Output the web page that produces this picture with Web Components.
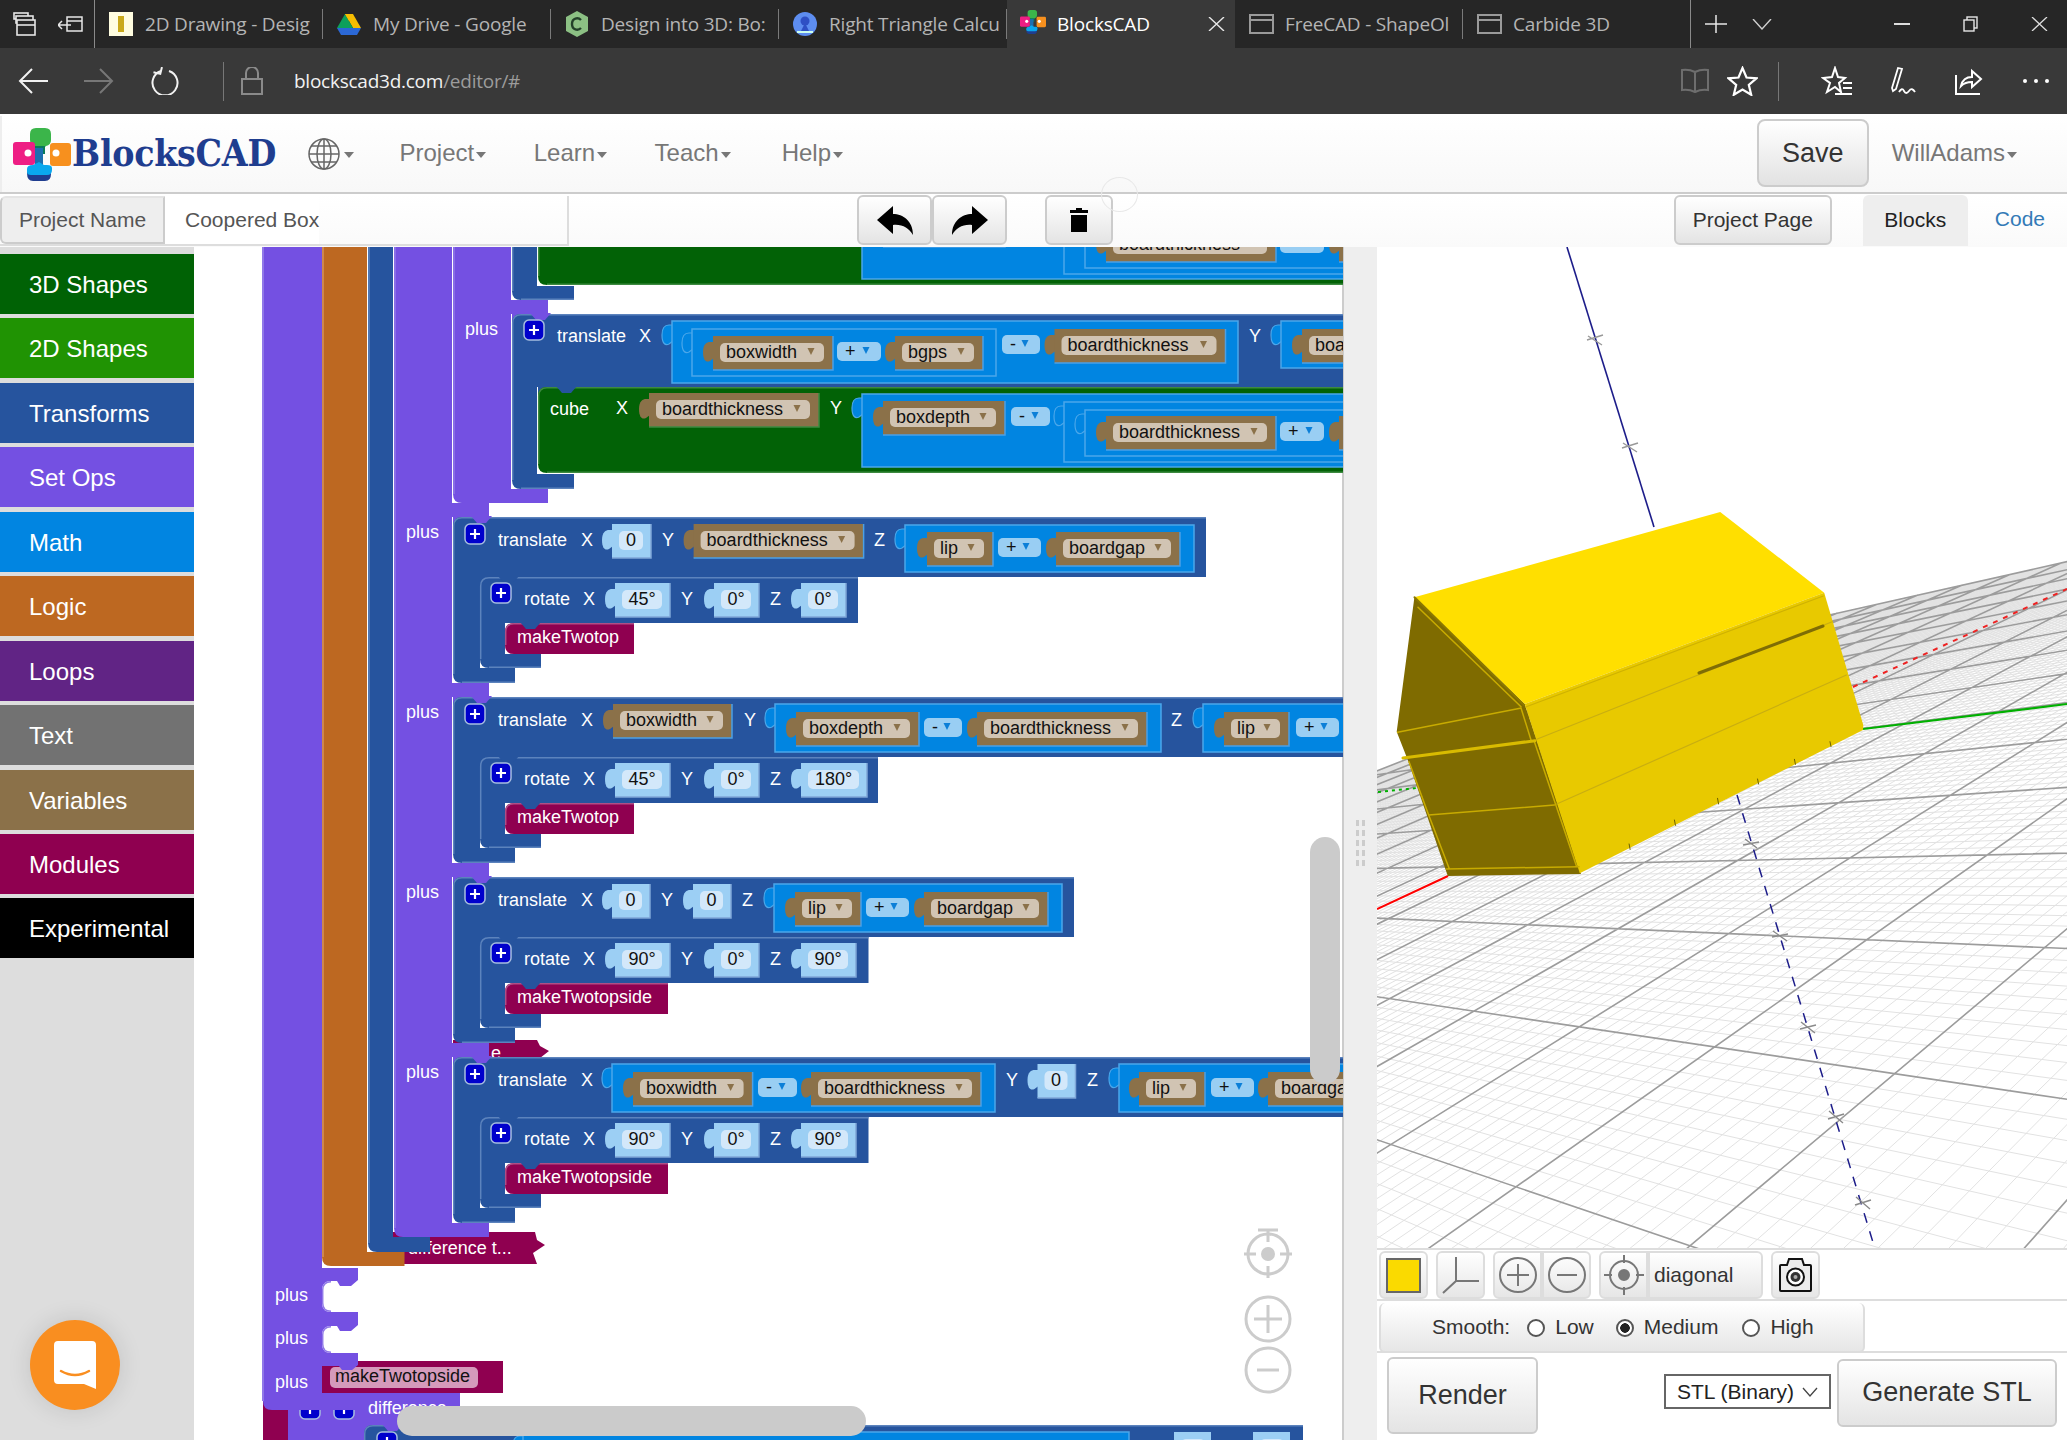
<!DOCTYPE html>
<html><head><meta charset="utf-8"><title>BlocksCAD</title>
<style>html,body{margin:0;padding:0;height:1440px;width:2067px;overflow:hidden;background:#fff}
cad-main{height:1193px}</style></head>
<body>
<edge-tabs></edge-tabs>
<edge-address></edge-address>
<cad-nav></cad-nav>
<cad-toolbar></cad-toolbar>
<cad-main>
  <cad-toolbox></cad-toolbox>
  <block-canvas></block-canvas>
  <split-gutter></split-gutter>
  <view-pane></view-pane>
</cad-main>
<chat-bubble></chat-bubble>
<script>
const def=(name,css,html)=>customElements.define(name,class extends HTMLElement{
  connectedCallback(){ if(this.shadowRoot) return; this.attachShadow({mode:'open'}).innerHTML=`<style>${css}</style>`+(typeof html==='function'?html(this):html);}
});
const logo=(w,h)=>`<svg width="${w}" height="${h}" viewBox="0 0 58 53">
<path d="M17 12V6q0-6 6-6h9q6 0 6 6v6q0 5-5 6l-2 2h-7l-2-2q-5-1-5-6z" fill="#3bb54a"/>
<rect x="21" y="18" width="11" height="8" fill="#0a7a5a"/>
<rect x="22" y="20" width="8" height="18" fill="#1c6fb0"/>
<rect x="0" y="14" width="22" height="23" rx="3" fill="#ee1e84"/><circle cx="15" cy="25" r="3.5" fill="#fff"/>
<rect x="37" y="15" width="21" height="23" rx="3" fill="#f7901e"/><circle cx="43" cy="25" r="3.5" fill="#fff"/>
<path d="M14 45q0 8 6 8h12q6 0 6-7v-4H14z" fill="#1f3d8f"/>
<path d="M14 44q0 3 4 3h16q5 0 5-5v-2q0-3-5-3h-3l-5-3-6 3q-6 0-6 4z" fill="#0aa8ee"/></svg>`;
const pageIco=`<svg width="25" height="20" viewBox="0 0 25 20" fill="none" stroke="#9a9a9a" stroke-width="2"><rect x="1" y="1" width="23" height="18"/><path d="M1 6h23"/></svg>`;
/* ---------- browser chrome ---------- */
def('browser-tab',`:host{display:flex;align-items:center;width:228px;height:48px;box-sizing:border-box;padding-left:13px;position:relative;color:#b4b4b4}
:host([active]){background:#393939;color:#fff}
:host(:not([active]):not([last]))::after{content:"";position:absolute;right:0;top:9px;height:30px;width:1px;background:#7a7a7a}
.i{width:26px;height:26px;flex:none;display:flex;align-items:center;justify-content:center}
.l{margin-left:11px;width:165px;white-space:nowrap;font:19px "Open Sans",sans-serif;letter-spacing:-.18px}
.x{margin-left:-10px;width:40px;display:flex;justify-content:center}`,
e=>`<span class="i"><slot name="icon"></slot></span><span class="l">${e.getAttribute('label')}</span>${e.hasAttribute('active')?'<span class="x"><svg width="17" height="14" viewBox="0 0 17 14" stroke="#e8e8e8" stroke-width="1.4"><path d="M1 0l15 14M16 0L1 14"/></svg></span>':''}`);
def('edge-tabs',`:host{display:flex;height:48px;background:#262626;align-items:stretch}
.lead{width:95px;flex:none;border-right:1px solid #8a8a8a;display:flex;align-items:center;gap:22px;padding-left:13px;box-sizing:border-box}
.ctl{display:flex;align-items:center;border-left:1px solid #8a8a8a;height:48px;flex:1}
.ctl svg{flex:none}`,
`<div class="lead">
<svg width="23" height="24" viewBox="0 0 23 24" fill="none" stroke="#e6e6e6" stroke-width="1.6"><rect x="1" y="1" width="14" height="6"/><rect x="3" y="4" width="17" height="7" fill="#262626"/><rect x="4" y="8" width="18" height="15" fill="#262626"/><path d="M4 13h18"/></svg>
<svg width="25" height="16" viewBox="0 0 25 16" fill="none" stroke="#e6e6e6" stroke-width="1.5"><path d="M9 1h15v14H9zM9 5h15M0 9h13M4 5l-4 4 4 4"/></svg>
</div>
<browser-tab label="2D Drawing - Desig"><svg slot="icon" width="24" height="24"><rect width="24" height="24" fill="#fffde0"/><rect x="9" y="4" width="6" height="16" fill="#c9a91b"/></svg></browser-tab>
<browser-tab label="My Drive - Google"><svg slot="icon" width="24" height="24" viewBox="0 0 24 24"><path d="M8 2h8l8 14h-8z" fill="#f6bd02"/><path d="M8 2l8 14-4 7L0 16z" fill="#0da05b"/><path d="M0 16h24l-4 7H4z" fill="#2b68d6"/><path d="M8 2h8l-4 7z" fill="#f6bd02"/></svg></browser-tab>
<browser-tab label="Design into 3D: Bo:"><svg slot="icon" width="24" height="26" viewBox="0 0 24 26"><path d="M12 0l11 6v14l-11 6L1 20V6z" fill="#8cc084"/><path d="M16 9c-3-3-9-2-9 4s6 7 9 4" fill="none" stroke="#23402a" stroke-width="2.4"/></svg></browser-tab>
<browser-tab label="Right Triangle Calcu"><svg slot="icon" width="24" height="24" viewBox="0 0 24 24"><circle cx="12" cy="12" r="12" fill="#5d8df0"/><circle cx="12" cy="9" r="4.5" fill="#2e4fc4"/><path d="M8 19h8l-3-6h-2z" fill="#2e4fc4"/><path d="M4 20h16" stroke="#cfe" stroke-width="2"/></svg></browser-tab>
<browser-tab active label="BlocksCAD"><span slot="icon">${logo(26,24)}</span></browser-tab>
<browser-tab label="FreeCAD - ShapeOl">${pageIco.replace('<svg','<svg slot="icon"')}</browser-tab>
<browser-tab label="Carbide 3D" last>${pageIco.replace('<svg','<svg slot="icon"')}</browser-tab>
<div class="ctl" style="margin-left:-1px">
<svg style="margin-left:14px" width="22" height="18" viewBox="0 0 22 18" stroke="#e8e8e8" stroke-width="1.5"><path d="M11 0v18M0 9h22"/></svg>
<svg style="margin-left:25px" width="20" height="11" viewBox="0 0 20 11" fill="none" stroke="#cfcfcf" stroke-width="1.4"><path d="M1 0l9 10 9-10"/></svg>
<svg style="margin-left:122px" width="16" height="2"><rect width="16" height="2" fill="#ddd"/></svg>
<svg style="margin-left:53px" width="15" height="16" viewBox="0 0 15 16" fill="none" stroke="#e6e6e6" stroke-width="1.4"><rect x="4" y="1" width="10" height="11"/><rect x="1" y="4" width="10" height="11" fill="#262626"/></svg>
<svg style="margin-left:53px" width="17" height="14" viewBox="0 0 17 14" stroke="#ddd" stroke-width="1.3"><path d="M1 0l15 14M16 0L1 14"/></svg>
</div>`);
def('edge-address',`:host{display:flex;height:66px;background:#393939;align-items:center;box-sizing:border-box;padding-left:18px;border-bottom:0}
svg{flex:none}
.u{font:19px "Open Sans",sans-serif;margin-left:31px;color:#f2f2f2;letter-spacing:-.25px;white-space:nowrap}.u i{font-style:normal;color:#9c9c9c}
.sep{width:1px;height:39px;background:#777;flex:none}.sp{flex:1}`,
`<svg width="30" height="26" viewBox="0 0 30 26" fill="none" stroke="#f2f2f2" stroke-width="2"><path d="M30 13H2M14 1L2 13l12 12"/></svg>
<svg style="margin-left:36px" width="30" height="26" viewBox="0 0 30 26" fill="none" stroke="#777" stroke-width="2"><path d="M0 13h28M16 1l12 12-12 12"/></svg>
<svg style="margin-left:36px" width="30" height="28" viewBox="0 0 30 28" fill="none" stroke="#f2f2f2" stroke-width="2"><path d="M11 4a12.5 12.5 0 1 0 8 0"/><path d="M11 0v7h-7" transform="rotate(14 11 4)"/></svg>
<span class="sep" style="margin-left:43px"></span>
<svg style="margin-left:17px" width="22" height="28" viewBox="0 0 22 28" fill="none" stroke="#8a8a8a" stroke-width="2"><rect x="1" y="12" width="20" height="15"/><path d="M5 12V6a6 6 0 0 1 12 0v6"/></svg>
<span class="u">blockscad3d.com<i>/editor/#</i></span><span class="sp"></span>
<svg width="30" height="26" viewBox="0 0 30 26" fill="none" stroke="#6e6e6e" stroke-width="2"><path d="M15 4q-6-3-13-2v20q7-1 13 2 6-3 13-2V2q-7-1-13 2zM15 4v20"/></svg>
<svg style="margin-left:17px" width="31" height="30" viewBox="0 0 31 30" fill="none" stroke="#fff" stroke-width="2.2"><path d="M15.5 2l4 9.5 10 .8-7.7 6.5 2.4 10-8.7-5.3-8.7 5.3 2.4-10L1.500 12.300l10-.8z"/></svg>
<span class="sep" style="margin-left:20px"></span>
<svg style="margin-left:42px" width="32" height="30" viewBox="0 0 32 30" fill="none" stroke="#fff" stroke-width="2"><path d="M14 2l3 9 7 1-6 5 2 9-6-5-8 5 3-9-7-5 9-1zM22 17h9M22 22h9M14 28h17"/></svg>
<svg style="margin-left:35px" width="30" height="30" viewBox="0 0 30 30" fill="none" stroke="#fff" stroke-width="1.8"><path d="M4 22L10 2l4 1-6 20-3 2zM11 26q3-5 5-1t5 0 6 1"/></svg>
<svg style="margin-left:35px" width="30" height="30" viewBox="0 0 30 30" fill="none" stroke="#fff" stroke-width="2"><path d="M3 9v19h24M8 20q2-9 11-9V5l9 8-9 8v-5q-7 0-11 4z"/></svg>
<svg style="margin-left:39px;margin-right:17px" width="28" height="6"><circle cx="3" cy="3" r="2" fill="#fff"/><circle cx="14" cy="3" r="2" fill="#fff"/><circle cx="25" cy="3" r="2" fill="#fff"/></svg>`);
/* ---------- app header ---------- */
def('nav-drop',`:host{display:inline-flex;align-items:center;font:24px "Liberation Sans",sans-serif;color:#777;white-space:nowrap;margin-top:-2px}
b{width:0;height:0;border:5.500px solid transparent;border-top:6px solid #777;border-bottom:0;margin-left:2px;margin-top:3px}`,`<slot></slot><b></b>`);
def('cad-nav',`:host{display:flex;align-items:center;height:78px;box-sizing:border-box;margin-top:2px;background:linear-gradient(#fff,#f8f8f8);border-bottom:2px solid #ccc;padding-left:13px;box-shadow:inset 3px 0 0 -1px #eee}
.brand{font:bold 37px "DejaVu Serif Condensed","DejaVu Serif",serif;color:#1f3d8f;margin-left:1px;letter-spacing:-.25px;white-space:nowrap;margin-top:-2px}
.sp{flex:1}
.save{width:112px;height:68px;box-sizing:border-box;border:2px solid #ccc;border-radius:8px;background:linear-gradient(#fff,#e2e2e2);font:27px "Liberation Sans",sans-serif;color:#333;display:flex;align-items:center;justify-content:center;margin-top:-2px}`,
`${logo(58,53)}<span class="brand">BlocksCAD</span>
<svg style="margin-left:32px" width="32" height="32" viewBox="0 0 32 32" fill="none" stroke="#666" stroke-width="1.500"><circle cx="16" cy="16" r="15"/><ellipse cx="16" cy="16" rx="7" ry="15"/><path d="M16 1v30M1 16h30M3 8h26M3 24h26"/></svg>
<nav-drop style="margin-left:2px"></nav-drop>
<nav-drop style="margin-left:45.500px">Project</nav-drop><nav-drop style="margin-left:47.500px">Learn</nav-drop><nav-drop style="margin-left:47.500px">Teach</nav-drop><nav-drop style="margin-left:51px">Help</nav-drop>
<span class="sp"></span><div class="save">Save</div>
<nav-drop style="margin-left:23px;margin-right:50px">WillAdams</nav-drop>`);
def('grad-btn',`:host{display:inline-flex;align-items:center;justify-content:center;box-sizing:border-box;height:50px;border:2px solid #ccc;border-radius:6px;background:linear-gradient(#fff,#e4e4e4);font:21px "Liberation Sans",sans-serif;color:#333;flex:none}`,`<slot></slot>`);
def('cad-toolbar',`:host{display:flex;align-items:flex-start;height:53px;background:linear-gradient(#fff,#fafafa);position:relative;font:21px "Liberation Sans",sans-serif;padding-top:1px;box-sizing:border-box}
.g{display:flex;width:569px;height:50px;box-sizing:border-box;border:2px solid #ddd;border-top:0;border-left:0;margin-top:1px}
.a{width:165px;background:#eee;color:#555;display:flex;align-items:center;justify-content:center;border-right:2px solid #ccc;border-left:2px solid #ccc;box-sizing:border-box;border-radius:6px 0 0 6px;border-top:2px solid #e4e4e4;border-bottom:2px solid #ccc}
.v{color:#555;display:flex;align-items:center;padding-left:20px;background:#fff}
.b{width:105px;height:51px;background:#eee;border-radius:6px 6px 0 0;display:flex;align-items:center;justify-content:center;color:#222;margin-left:31px;padding-bottom:2px;box-sizing:border-box}
.c{color:#337ab7;margin-left:27px}
.cursor{position:absolute;left:1101px;top:-17px;width:37px;height:35px;border:1px solid #e8e8e8;border-radius:50%;box-sizing:border-box}
.sp{flex:1}`,
`<div class="g"><div class="a">Project Name</div><div class="v">Coopered Box</div></div>
<grad-btn style="width:75px;margin-left:288px"><svg width="36" height="29" viewBox="0 0 36 29"><path d="M16 0v8c10 0 20 7 20 21-4-7-11-11-20-10v9L0 14z"/></svg></grad-btn>
<grad-btn style="width:75px"><svg width="36" height="29" viewBox="0 0 36 29"><path d="M20 0v8C10 8 0 15 0 29c4-7 11-11 20-10v9l16-14z"/></svg></grad-btn>
<grad-btn style="width:68px;margin-left:38px"><svg width="20" height="24" viewBox="0 0 20 24"><path d="M7 0h6v2h6v3H1V2h6zM2 7h16v17H2z"/></svg></grad-btn>
<span class="sp"></span>
<grad-btn style="width:158px">Project Page</grad-btn>
<div class="b">Blocks</div><span class="c" style="margin-top:12px;margin-right:22px">Code</span>
<span class="cursor"></span>`);
/* ---------- toolbox ---------- */
def('tool-item',`:host{display:flex;align-items:center;height:60px;padding:2px 0 0 29px;box-sizing:border-box;margin-bottom:4.450px;color:#fff;font:24px "Liberation Sans",sans-serif}`,`<slot></slot>`);
def('cad-toolbox',`:host{display:block;width:194px;flex:none;background:#ddd;padding-top:7px;box-sizing:border-box}`,
[['3D Shapes','#006205'],['2D Shapes','#209303'],['Transforms','#26549e'],['Set Ops','#7450e2'],['Math','#0185e1'],['Logic','#bd6821'],['Loops','#612485'],['Text','#727272'],['Variables','#8b7149'],['Modules','#8f0050'],['Experimental','#000']]
.map(([t,c])=>`<tool-item style="background:${c}">${t}</tool-item>`).join(''));
def('cad-main',`:host{display:flex;width:2067px}`,`<slot></slot>`);
def('split-gutter',`:host{display:flex;flex-direction:column;align-items:center;justify-content:flex-start;width:33px;flex:none;background:#eee;padding-top:573px;box-sizing:border-box}
i{display:block;width:9px;height:6px;margin-bottom:4px;background:linear-gradient(90deg,#ccc 3px,transparent 3px,transparent 6px,#ccc 6px)}`,`<i></i><i></i><i></i><i></i><i></i>`);
/* ---------- block workspace ---------- */
const PUR='#7450e2',PL='#9179e8',BLU='#26549e',BL='#5c83bd',GRN='#026206',GL='#3d8a40',MAT='#0185e1',ML='#4ba7ea',BRN='#8b7149',BGE='#d1c4b3',CRM='#8f0050',CL='#b04f86',ORG='#bd6821',OL='#d4925c',VAL='#9ccff4',VIN='#d3e8fa';
function build(){
 let s='';
 const add=x=>s+=x;
 const T=(x,cy,t,f='#fff',sz=18,w='normal')=>{ if(cy<244||x>1330||!t) return; add(`<text x="${x}" y="${cy+6}" fill="${f}" font-size="${sz}" font-weight="${w}">${t}</text>`)};
 const R=(x,y,w,h,f,r=0)=>add(`<rect x="${x}" y="${y}" width="${w}" height="${h}" rx="${r}" fill="${f}"/>`);
 const caret=(cx,cy,c)=>add(`<path d="M${cx-3.500},${cy-3}h7l-3.500,7z" fill="${c}"/>`);
 const tab=(bx,y,c,st)=>add(`<path d="M${bx+1},${y+4} h-4 c-3,0 -7,2 -7,10 c0,8 3,11 7,9 l4,-3" fill="${c}" ${st?`stroke="${st}" stroke-width="1.200"`:''}/>`);
 const edge=(x1,y1,w,h,c='#4ba0e6')=>add(`<path d="M${x1},${y1+h}H${x1+w}V${y1}" fill="none" stroke="${c}" stroke-width="1.500"/>`);
 const V=(bx,y,w,t,ec)=>{tab(bx,y+2,BRN);R(bx,y,w,34,BRN);edge(bx,y,w,34,ec);R(bx+7,y+7,w-16,19,BGE,5);T(bx+13,y+16,t,'#111');caret(bx+w-22,y+15,BRN)};
 const P=(x,y,w,op)=>{R(x,y,w,19,'#99cef3',5);T(x+8,y+9,op,'#111',18);caret(x+w-15,y+8,'#0b7fd8')};
 const K=(bx,y,w,t,inx,inw)=>{tab(bx,y+2,VAL);R(bx,y,w,34,VAL);edge(bx,y,w,34,'#7fa6d8');const iw=inw||(w-15);R(bx+7,y+7,iw,19,VIN,5);add(`<text x="${bx+7+iw/2}" y="${y+22}" fill="#111" font-size="18" text-anchor="middle">${t}</text>`)};
 const M=(bx,y,x2,h)=>{tab(bx,y,MAT,ML);add(`<rect x="${bx}" y="${y}" width="${x2-bx}" height="${h}" fill="${MAT}" stroke="${ML}" stroke-width="1.500"/>`)};
 const B=(x,y)=>{add(`<rect x="${x}" y="${y}" width="20" height="20" rx="5" fill="#0000cc" stroke="#a7bde0" stroke-width="1.500"/><path d="M${x+10},${y+5}v10M${x+5},${y+10}h10" stroke="#fff" stroke-width="2.200"/>`)};
 const notch=(x,y,c)=>add(`<path d="M${x+18},${y-1}l6,7h9l6,-7z" fill="${c}"/>`);
 const cb=(c,l,p,xL,xR,yT,yR,sw,yF,yB,fR)=>{
   R(xL,yT,12,12,p);
   add(`<path d="M${xL},${yT+9}q0,-9 9,-9H${xR}V${yR}H${xL+sw}V${yF}H${fR}V${yB}H${xL+9}q-9,0 -9,-9z" fill="${c}"/>`);
   add(`<path d="M${xL+.7},${yB-9}V${yT+9}q0,-8.300 8.300,-8.300H${xR}" fill="none" stroke="${l}" stroke-width="1.500"/>`);
   add(`<path d="M${xL+9},${yB-.7}H${fR}" stroke="${l}" stroke-width="1.500"/>`);
   notch(xL,yT,p);
 };
 const make=(x,y,w,t)=>{add(`<path d="M${x},${y+9}q0,-9 9,-9H${x+w}V${y+31}H${x+9}q-9,0 -9,-9z" fill="${CRM}"/><path d="M${x+.7},${y+22}V${y+9}q0,-8.300 8.300,-8.300H${x+w}" fill="none" stroke="${CL}" stroke-width="1.500"/>`);notch(x-3,y,BLU);T(x+12,y+14,t)};

 /* low-order: crimson pieces under the stacks */
 add(`<path d="M453,1040H537l3,6 9,5-9,7v14H453z" fill="${CRM}"/>`);
 T(491,1053,'e');
 add(`<path d="M393,1232H535l2,8 8,5-12,8 4,11H393z" fill="${CRM}"/>`);
 T(408,1248,'difference t...');
 /* bottom stuff */
 R(263,1400,30,45,CRM);
 R(322,1393,138,50,PUR);R(288,1405,80,40,PUR);
 B(300,1399);B(334,1399);T(368,1408,'difference');
 add(`<path d="M322,1361H503V1393H322z" fill="${CRM}"/>`);
 R(330,1367,148,21,'#d59abb',5);T(335,1376,'makeTwotopside','#111');
 cb(BLU,BL,PUR,364,1303,1425,1500,27,1540,1550,430);
 B(377,1432);M(523,1432,1129,60);R(1174,1432,37,34,VAL);R(1181,1439,24,19,VIN,5);R(1253,1432,37,34,VAL);R(1260,1439,24,19,VIN,5);
 /* big purple */
 add(`<path d="M262,240H322V1268H358V1280l-7,6h-11l-3,-5H331q-9,0 -9,9V1303q0,9 9,9H358V1325l-7,6h-11l-3,-5H331q-9,0 -9,9V1344q0,9 9,9H358V1365l-6,5h-10l-3,-4H322V1393H358V1410H272q-9,0 -9,-9z" fill="${PUR}"/>`);
 add(`<path d="M263,240V1401" stroke="${PL}" stroke-width="2"/>`);
 add(`<path d="M331,1281.700q-8.300,0 -8.300,8.300V1303q0,8.300 8.300,8.300M331,1326.700q-8.300,0 -8.300,8.300V1344q0,8.300 8.300,8.300" fill="none" stroke="${PL}" stroke-width="1.500"/>`);
 T(275,1295,'plus');T(275,1338,'plus');T(275,1382,'plus');
 /* orange */
 add(`<path d="M322,240H367V1252H404.500V1266H331q-9,0 -9,-9z" fill="${ORG}"/><path d="M323,240V1257" stroke="${OL}" stroke-width="1.500"/>`);
 /* blue */
 add(`<path d="M368,240H393V1237H430V1252H377q-9,0 -9,-9z" fill="${BLU}"/><path d="M369,240V1243" stroke="${BL}" stroke-width="1.500"/>`);
 /* purple 1 */
 add(`<path d="M394,240H452V503H489V517H452V683H489V697H452V863H489V877H452V1043H489V1057H452V1223H489V1237H403q-9,0 -9,-9z" fill="${PUR}"/><path d="M395,240V1228" stroke="${PL}" stroke-width="1.500"/>`);
 /* purple 2 */
 add(`<path d="M453,240H511V300H548V314H511V489H548V503H462q-9,0 -9,-9z" fill="${PUR}"/><path d="M454,240V494" stroke="${PL}" stroke-width="1.500"/>`);
 T(465,329,'plus');T(406,532,'plus');T(406,712,'plus');T(406,892,'plus');T(406,1072,'plus');

 /* cube rows */
 const cube=d=>{
  cb(GRN,GL,BLU,538,1350,387+d,473+d,0,473+d,473+d,1350);
  T(550,409+d,'cube');T(616,408+d,'X');V(649,393+d,170,'boardthickness',GL);T(830,408+d,'Y');
  M(862,394+d,1350,73);
  V(883,401+d,122,'boxdepth');P(1011,407+d,39,'-');
  M(1064,402+d,1350,60);M(1085,410+d,1350,46);
  V(1106,416+d,170,'boardthickness');P(1280,422+d,44,'+');V(1339,416+d,60,'');
 };
 /* translate + cube (first, partly hidden under the header) */
 cb(BLU,BL,PUR,512,1350,126,199,25,286,300,574);
 cube(-188);
 cb(BLU,BL,PUR,512,1350,314,387,25,474,489,574);
 B(524,320);T(557,336,'translate');T(639,336,'X');
 M(672,321,1238,62);M(692,329,996,47);
 V(713,336,120,'boxwidth');P(837,342,44,'+');V(895,336,88,'bgps');
 P(1002,335,38,'-');V(1054.500,329,171,'boardthickness');
 T(1249,336,'Y');M(1281,321,1350,47);V(1302,329,120,'boardthickness');
 cube(0);

 const rot=(y,end,a,c,cw,mk,mw)=>{
  cb(BLU,BL,BLU,480,end,y,y+46,25,y+77,y+91,541);
  B(491,y+6);T(524,y+22,'rotate');T(583,y+22,'X');K(615,y+6,55,a);
  T(681,y+22,'Y');K(714,y+6,45,'0°');T(770,y+22,'Z');K(801,y+6,cw,c);
  make(505,y+46,mw,mk);
 };
 const tr=(y,end)=>{cb(BLU,BL,PUR,453,end,y,y+60,27,y+151,y+166,515);B(465,y+7);T(498,y+23,'translate');T(581,y+23,'X')};
 /* 517 */
 tr(517,1206);K(612,524,39,'0');T(662,540,'Y');V(693.600,524,170,'boardthickness');T(874,540,'Z');
 M(905,525,1194,47);V(927,532,66,'lip');P(998,538,43,'+');V(1056,532,124,'boardgap');
 rot(577,858,'45°','0°',45,'makeTwotop',129);
 /* 697 */
 tr(697,1350);V(613,704,119,'boxwidth');T(744,720,'Y');
 M(775,704,1161,48);V(796,712,123,'boxdepth');P(924,718,38,'-');V(977,712,170,'boardthickness');
 T(1171,720,'Z');M(1203,704,1350,48);V(1224,712,65,'lip');P(1296,718,43,'+');
 rot(757,878,'45°','180°',66,'makeTwotop',129);
 /* 877 */
 tr(877,1074);K(612,884,38,'0');T(661,900,'Y');K(693,884,38,'0');T(742,900,'Z');
 M(774,884,1062,48);V(795,892,66,'lip');P(866,898,43,'+');V(924,892,124,'boardgap');
 rot(937,868.500,'90°','90°',55,'makeTwotopside',163);
 /* 1057 */
 tr(1057,1350);M(612,1064,995,48);V(633,1072,119.600,'boxwidth');P(758,1078,39,'-');V(811,1072,170,'boardthickness');
 T(1006,1080,'Y');K(1037.500,1064,38,'0');T(1087,1080,'Z');
 M(1119,1064,1350,48);V(1139,1072,66,'lip');P(1211,1078,43,'+');V(1268,1072,120,'boardgap');
 rot(1117,868.500,'90°','90°',55,'makeTwotopside',163);

 /* controls over the canvas */
 add(`<g fill="none" stroke="#ccc" stroke-width="3"><circle cx="1268" cy="1254" r="20"/><path d="M1268 1230v12M1268 1266v12M1244 1254h12M1280 1254h12M1258 1230h20"/><circle cx="1268" cy="1319" r="22"/><path d="M1268 1305v28M1254 1319h28"/><circle cx="1268" cy="1370" r="22"/><path d="M1257 1370h22"/></g><circle cx="1268" cy="1254" r="7" fill="#ccc"/>`);
 R(1310,837,30,247,'#cbcbcb',15);
 R(397,1406,469,30,'#cbcbcb',15);
 return s;
}
def('block-canvas',`:host{display:block;flex:1;min-width:0;background:#fff;border-right:2px solid #ccc;box-sizing:border-box;width:1150px}
svg{display:block}text{font-family:"Liberation Sans",sans-serif}`,
()=>`<svg width="1149" height="1193" viewBox="194 247 1149 1193">${build()}</svg>`);
/* ---------- 3D viewer ---------- */
function grid(){
 const VB=[3018,129],VA=[625,885],O=[1716,747];
 const pt=(u,k)=>{const c=.054*u,b=.0257-.0579*k,d=Math.max(1+c+b,.025);return [(O[0]+c*VB[0]+b*VA[0])/d,(O[1]+c*VB[1]+b*VA[1])/d]};
 const kmaxFor=u=>Math.min(12,(1.0257+.054*u-.03)/.0579), umin=k=>Math.max(-10,((.03-1-(.0257-.0579*k))/.054));
 let mn='',mj='';
 const ln=(a,b)=>`M${a[0].toFixed(1)} ${a[1].toFixed(1)}L${b[0].toFixed(1)} ${b[1].toFixed(1)}`;
 for(let i=-100;i<=90;i++){const u=i/10,seg=ln(pt(u,-10),pt(u,kmaxFor(u)));if(i%10==0)mj+=seg;else mn+=seg}
 for(let i=-100;i<=120;i++){const k=i/10,seg=ln(pt(umin(k),k),pt(9,k));if(i%10==0)mj+=seg;else mn+=seg}
 return `<path d="${mn}" stroke="#e2e2e2" stroke-width="1" fill="none"/><path d="${mj}" stroke="#9c9c9c" stroke-width="1.600" fill="none"/>`;
}
function box(){
 const ticks=[[583,1092,1108],[685,1020,1036],[782,955,972],[872,897,912],[955,838,853],[1035,785,800]].map(([x,a,b])=>`M${1370+x/2.25} ${480+a/3}l1 ${(b-a)/3}`).join('');
 return `
 <polygon points="1414.400,597.300 1396.700,731.700 1407.800,760 1447.800,876 1581,874 1536.700,740 1524.700,704" fill="#7f6b00"/>
 <polygon points="1414.400,597.300 1720.200,512 1824.200,592.700 1524.700,704" fill="#ffdf00"/>
 <polygon points="1524.700,704 1824.200,592.700 1863.300,725 1863,730 1579.800,873.300" fill="#e8c900"/>
 <g fill="none" stroke-linecap="round">
 <path d="M1418 607.300L1521 706.700M1397.600 732.300L1520.200 708.300M1521 708L1531 740M1409 761.700L1428.700 815L1449 868M1428.700 815L1554.400 805M1534.400 741.700L1576.700 866.700M1446.400 869L1579 866.700" stroke="#c8ab00" stroke-width="1.500"/>
 <path d="M1403 758L1535 740.700" stroke="#d9bb00" stroke-width="3"/>
 <path d="M1414.500 597.300L1524 705" stroke="#8c7800" stroke-width="2"/>
 <path d="M1525.600 707L1823.300 596" stroke="#cfb200" stroke-width="1.200"/>
 <path d="M1536.700 739.300L1832.200 621.700M1556.700 804L1846.400 675" stroke="#c9ae10" stroke-width="1.200"/>
 <path d="M1699 673L1823 626" stroke="#7f6d05" stroke-width="3"/>
 <path d="${ticks}" stroke="#6b6000" stroke-width="1"/></g>`;
}
def('view-btn',`:host{display:inline-flex;align-items:center;justify-content:center;box-sizing:border-box;height:48px;width:49px;border:2px solid #ddd;border-radius:6px;background:linear-gradient(#fff,#e6e6e6);flex:none;font:21px "Liberation Sans",sans-serif;color:#333}`,`<slot></slot>`);
def('radio-opt',`:host{display:inline-flex;align-items:center;font:21px "Liberation Sans",sans-serif;color:#333}
i{display:inline-block;width:18px;height:18px;box-sizing:border-box;border:2px solid #555;border-radius:50%;background:#fff;margin-right:10px;position:relative;top:1px}
:host([on]) i{background:radial-gradient(#222 0 4.500px,#fff 5px)}`,`<i></i><slot></slot>`);
def('view-pane',`:host{display:flex;flex-direction:column;flex:none;width:690px;height:1193px;background:#fff}
.c{height:1001px;flex:none}svg{display:block}
.r1{height:49px;display:flex;border-top:2px solid #ddd;border-bottom:2px solid #ddd;box-sizing:content-box;padding-left:2px;flex:none}
.r1 view-btn{margin-top:1px}
.r2{height:52px;flex:none;border-bottom:2px solid #ddd;box-sizing:border-box;padding-left:2px}
.sm{width:486px;height:50px;box-sizing:border-box;border:2px solid #ddd;border-top:0;background:linear-gradient(#fff,#e6e6e6);font:21px "Liberation Sans",sans-serif;color:#333;display:flex;align-items:center;padding-left:51px;margin-top:2px;border-radius:6px}
.r3{flex:1;display:flex;align-items:center;position:relative;padding-left:10px}
.sel{box-sizing:border-box;margin-left:126px;width:167px;height:35px;border:2px solid #666;font:21px "Liberation Sans",sans-serif;color:#222;display:flex;align-items:center;padding-left:11px;gap:8px;margin-top:-10px}`,
()=>`<div class="c"><svg width="690" height="1001" viewBox="1377 247 690 1001">
<path d="M1567 247L1654 527" stroke="#1d1d8a" stroke-width="1.600"/>
<path d="M1587 340l16 -5M1622 448l16 -5M1588 336l14 9M1623 443l14 9" stroke="#999" stroke-width="1.400"/>
${grid()}
<path d="M1863 729L2067 704" stroke="#00b000" stroke-width="2.200"/>
<path d="M1378 792L1417 788" stroke="#00b000" stroke-width="2" stroke-dasharray="3 4"/>
<path d="M1853 687L2067 589" stroke="#ee2222" stroke-width="2" stroke-dasharray="5 6"/>
<path d="M1448 876L1377 909" stroke="#f00" stroke-width="2"/>
<path d="M1737 795L1875 1249" stroke="#1d1d8a" stroke-width="1.500" stroke-dasharray="10 9"/>
<path d="M1772 937l16 -3M1773 931l14 10M1800 1029l16 -4M1801 1022l14 11M1828 1119l16 -5M1829 1111l14 12M1855 1205l16 -5M1856 1197l14 12M1743 845l16 -3M1745 839l12 9" stroke="#8a8a8a" stroke-width="1.400" fill="none"/>
${box()}</svg></div>
<div class="r1">
<view-btn><svg width="35" height="35"><rect x="1" y="1" width="33" height="33" fill="#fada00" stroke="#666" stroke-width="2"/></svg></view-btn>
<view-btn style="margin-left:8px"><svg width="38" height="38" viewBox="0 0 38 38" fill="none" stroke="#777" stroke-width="2"><path d="M14 1v24L1 37M14 25h23"/></svg></view-btn>
<view-btn style="margin-left:8px;border-radius:6px 0 0 6px"><svg width="38" height="36" viewBox="0 0 38 36" fill="none" stroke="#777" stroke-width="2"><ellipse cx="19" cy="18" rx="18" ry="17"/><path d="M19 7v22M8 18h22"/></svg></view-btn>
<view-btn style="border-radius:0 6px 6px 0"><svg width="38" height="36" viewBox="0 0 38 36" fill="none" stroke="#777" stroke-width="2"><ellipse cx="19" cy="18" rx="18" ry="17"/><path d="M9 18h20"/></svg></view-btn>
<view-btn style="margin-left:8px;border-radius:6px 0 0 6px"><svg width="40" height="40" viewBox="0 0 40 40" fill="none" stroke="#777" stroke-width="2"><circle cx="20" cy="20" r="14"/><path d="M20 0v8M20 32v8M0 20h8M32 20h8"/><circle cx="20" cy="20" r="5" fill="#777"/></svg></view-btn>
<view-btn style="width:115px;border-radius:0 6px 6px 0;justify-content:flex-start;padding-left:4px">diagonal</view-btn>
<view-btn style="margin-left:8px"><svg width="33" height="36" viewBox="0 0 33 36"><path d="M2 8h6l2-6h13l2 6h6q1 0 1 1v24q0 1-1 1H2q-1 0-1-1V9q0-1 1-1z" fill="#ececec" stroke="#111" stroke-width="2"/><circle cx="16.500" cy="20" r="8.500" fill="#fff" stroke="#111" stroke-width="2"/><circle cx="16.500" cy="20" r="5" fill="#333"/><circle cx="16.500" cy="20" r="2" fill="#aaa"/></svg></view-btn>
</div>
<div class="r2"><div class="sm"><span>Smooth:</span><radio-opt style="margin-left:17px">Low</radio-opt><radio-opt on style="margin-left:22px">Medium</radio-opt><radio-opt style="margin-left:24px">High</radio-opt></div></div>
<div class="r3">
<grad-btn style="width:151px;height:77px;font-size:27px;margin-top:-2px">Render</grad-btn>
<div class="sel"><span>STL (Binary)</span><svg width="16" height="10" viewBox="0 0 16 10" fill="none" stroke="#444" stroke-width="1.300"><path d="M1 1l7 8 7-8"/></svg></div>
<grad-btn style="width:220px;height:68px;font-size:27px;margin-left:6px;margin-top:-8px">Generate STL</grad-btn>
</div>`);
/* ---------- chat launcher ---------- */
def('chat-bubble',`:host{position:fixed;left:30px;top:1320px;width:90px;height:90px;border-radius:50%;background:#f98e20;box-shadow:0 0 24px rgba(0,0,0,.12);display:flex;align-items:center;justify-content:center}`,
`<svg width="42" height="48" viewBox="0 0 42 48"><path d="M4 0h34q4 0 4 4v44l-12-5H4q-4 0-4-4V4q0-4 4-4z" fill="#fff"/><path d="M7 30q14 8 28 0" fill="none" stroke="#f98e20" stroke-width="2.500" stroke-linecap="round"/></svg>`);
</script>
</body></html>
